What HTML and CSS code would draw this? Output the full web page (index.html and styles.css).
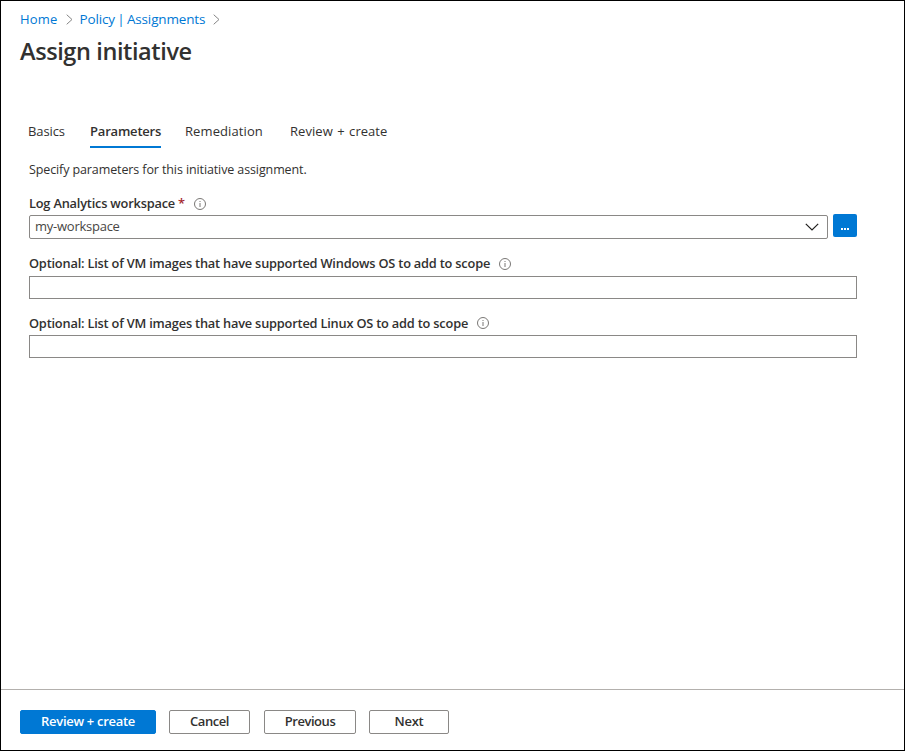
FILE: index.html
```html
<!DOCTYPE html>
<html lang="en">
<head>
<meta charset="utf-8">
<title>Assign initiative</title>
<link rel="stylesheet" href="styles.css">
</head>
<body>
<div class="page">
  <header class="header">
    <nav class="breadcrumb">
      <a class="crumb-home">Home</a>
      <svg class="sep" viewBox="0 0 7 11"><path d="M.7.7 6 5.5.7 10.3"/></svg>
      <a class="crumb-policy">Policy | Assignments</a>
      <svg class="sep" viewBox="0 0 7 11"><path d="M.7.7 6 5.5.7 10.3"/></svg>
    </nav>
    <h1>Assign initiative</h1>
  </header>
  <main class="content">
    <nav class="tabs">
      <a class="tab basics">Basics</a>
      <a class="tab active">Parameters</a>
      <a class="tab remediation">Remediation</a>
      <a class="tab review">Review + create</a>
    </nav>
    <p class="intro">Specify parameters for this initiative assignment.</p>
    <div class="field">
      <div class="label"><span>Log Analytics workspace</span><b class="star">*</b>
        <svg class="info" viewBox="0 0 12 12"><circle cx="6" cy="6" r="5.5"/><path d="M6 5v4M6 3v1"/></svg></div>
      <div class="row">
        <div class="input select"><span>my-workspace</span><svg class="chev" viewBox="0 0 14 8"><path d="M.8.8 7 7l6.200-6.200"/></svg></div>
        <button class="more"><i></i><i></i><i></i></button>
      </div>
    </div>
    <div class="field second">
      <div class="label"><span>Optional: List of VM images that have supported Windows OS to add to scope</span>
        <svg class="info" viewBox="0 0 12 12"><circle cx="6" cy="6" r="5.5"/><path d="M6 5v4M6 3v1"/></svg></div>
      <div class="input"></div>
    </div>
    <div class="field last">
      <div class="label"><span>Optional: List of VM images that have supported Linux OS to add to scope</span>
        <svg class="info" viewBox="0 0 12 12"><circle cx="6" cy="6" r="5.5"/><path d="M6 5v4M6 3v1"/></svg></div>
      <div class="input"></div>
    </div>
  </main>
  <footer class="footer">
    <button class="btn primary">Review + create</button>
    <button class="btn cancel">Cancel</button>
    <button class="btn previous">Previous</button>
    <button class="btn next">Next</button>
  </footer>
</div>
</body>
</html>
```
FILE: styles.css
```css
* { box-sizing: border-box; }
body { margin: 0; font: 13px/18px "Open Sans", "Noto Sans", sans-serif; color: #323130; }
.page { width: 905px; height: 751px; border: 1px solid #000; background: #fff; display: flex; flex-direction: column; }
.header { padding: 9px 19px 0; height: 121px; }
.breadcrumb { display: flex; align-items: center; height: 18px; color: #0078d4; white-space: nowrap; }
.crumb-home { letter-spacing: .2px; }
.crumb-policy { font-size: 13.500px; letter-spacing: -.15px; word-spacing: -1px; }
.sep { width: 7px; height: 11px; margin: 0 7px 0 8px; fill: none; stroke: #858585; }
h1 { margin: 7px 0 0; font-size: 23.500px; line-height: 32px; font-weight: 600; letter-spacing: -.4px; white-space: nowrap; }
.content { padding: 0 28px; flex: 1; }
.tabs { display: flex; height: 26px; margin-left: -1px; }
.tab { height: 26px; white-space: nowrap; }
.basics { width: 62px; letter-spacing: -.1px; }
.active { width: 71px; margin-right: 24px; font-weight: 600; letter-spacing: -.2px; border-bottom: 2px solid #0078d4; }
.remediation { width: 105px; letter-spacing: .1px; }
.review { letter-spacing: .05px; word-spacing: 1px; }
.intro { margin: 13px 0 15px; height: 18px; font-size: 12.500px; letter-spacing: -.11px; white-space: nowrap; }
.field { height: 60px; width: 828px; }
.label { display: flex; align-items: center; height: 18px; margin-bottom: 3px; font-weight: 600; font-size: 12.800px; letter-spacing: -.2px; white-space: nowrap; }
.second .label { margin-bottom: 4px; }
.star { color: #a4262c; margin-left: 3px; font-weight: 600; }
.info { width: 12px; height: 12px; margin: 1px 0 0 9px; fill: none; stroke: #797775; }
.last .info { margin-top: -1px; }
.row { display: flex; gap: 5px; align-items: flex-start; margin-top: -1px; }
.input { border: 1px solid #8a8886; height: 23px; }
.select { height: 24px; margin-top: 1px; flex: 1; border-radius: 2px; display: flex; align-items: center; justify-content: space-between; padding: 0 8px 2px 5px; color: #484644; letter-spacing: -.25px; }
.chev { width: 14px; height: 8px; margin-top: 2px; fill: none; stroke: #201f1e; stroke-width: 1.2; }
.more { width: 24px; height: 23px; border: 0; border-radius: 2px; padding: 7px 0 0; background: #0078d4; display: flex; gap: 1px; align-items: center; justify-content: center; }
.more i { width: 2px; height: 2px; background: #fff; }
.footer { height: 61px; border-top: 1px solid #b3b0ad; padding: 20px 19px; display: flex; }
.btn { font: 600 13px/18px "Open Sans", sans-serif; color: #323130; height: 24px; border: 1px solid #8a8886; background: #fff; padding: 0 0 2px; border-radius: 2px; white-space: nowrap; }
.primary { width: 136px; background: #0078d4; border-color: #0078d4; color: #fff; letter-spacing: -.3px; }
.cancel { width: 81px; margin-left: 13px; letter-spacing: -.45px; }
.previous { width: 92px; margin-left: 14px; letter-spacing: -.45px; }
.next { width: 80px; margin-left: 13px; letter-spacing: -.3px; }
```
